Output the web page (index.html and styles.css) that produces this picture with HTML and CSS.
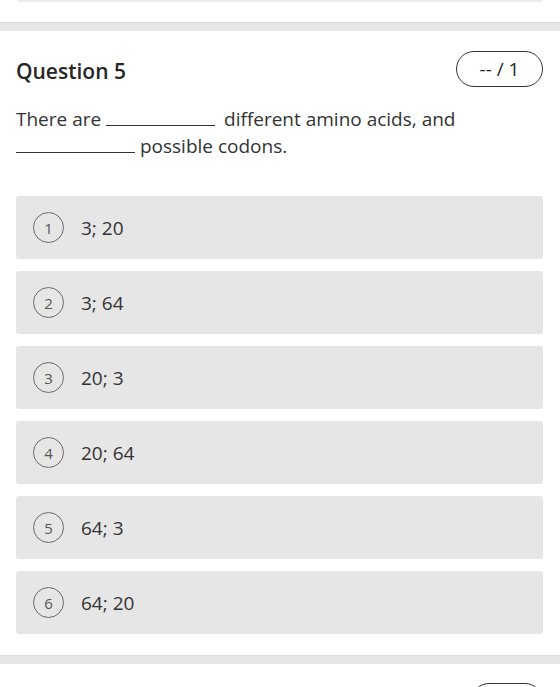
FILE: index.html
```html
<!doctype html>
<html lang="en">
<head>
    <meta charset="utf-8">
    <title>Question 5</title>
    <link rel="stylesheet" href="styles.css">
</head>
<body>
    <div class="prev-option"></div>
    <div class="divider"></div>

    <div class="question">
        <div class="question-head">
            <h2 class="question-title">Question 5</h2>
            <div class="score">-- / 1</div>
        </div>

        <p class="question-text">There are <span class="blank blank-1"></span> different amino acids, and <span class="blank blank-2"></span> possible codons.</p>

        <div class="options">
            <div class="option"><span class="num">1</span><span class="answer">3; 20</span></div>
            <div class="option"><span class="num">2</span><span class="answer">3; 64</span></div>
            <div class="option"><span class="num">3</span><span class="answer">20; 3</span></div>
            <div class="option"><span class="num">4</span><span class="answer">20; 64</span></div>
            <div class="option"><span class="num">5</span><span class="answer">64; 3</span></div>
            <div class="option"><span class="num">6</span><span class="answer">64; 20</span></div>
        </div>
    </div>

    <div class="divider"></div>
    <div class="next-head">
        <div class="score score-next"></div>
    </div>
</body>
</html>
```

FILE: styles.css
```css
html, body {
    height: 687px;
    overflow: hidden;
}
body {
    font-family: "Open Sans", sans-serif;
    margin: 0;
    color: #333;
    background: #fff;
}
.prev-option {
    height: 2px;
    margin: 0 17px 20px 17px;
    background: #ececec;
    border-radius: 0 0 3px 3px;
}
.divider {
    height: 8px;
    background: #e6e6e6;
    border-top: 1px solid #dadada;
}
.question {
    padding: 20px 17px 21px 16px;
}
.question-head {
    display: flex;
    justify-content: space-between;
    align-items: center;
}
.question-title {
    margin: 4px 0 0 0;
    font-size: 21px;
    font-weight: 600;
    color: #262626;
}
.score {
    width: 85px;
    height: 34px;
    border: 1.5px solid #333;
    border-radius: 20px;
    display: flex;
    align-items: center;
    justify-content: center;
    font-size: 19px;
    color: #262626;
}
.question-text {
    margin: 19px 0 0 0;
    font-size: 19px;
    line-height: 27px;
    color: #333;
}
.blank {
    display: inline-block;
    height: 1px;
    border-bottom: 1px solid #333;
    vertical-align: baseline;
}
.blank-1 {
    width: 109px;
    margin-right: 4px;
}
.blank-2 {
    width: 119px;
}
.options {
    margin-top: 36px;
    display: flex;
    flex-direction: column;
    gap: 12px;
}
.option {
    height: 63px;
    background: #e6e6e6;
    border-radius: 3px;
    display: flex;
    align-items: center;
    padding-left: 17px;
}
.num {
    width: 29px;
    height: 29px;
    border: 1.5px solid #6b6b6b;
    border-radius: 50%;
    display: flex;
    align-items: center;
    justify-content: center;
    font-size: 15px;
    color: #555;
}
.answer {
    margin-left: 17px;
    font-size: 19px;
    color: #333;
}
.next-head {
    display: flex;
    justify-content: flex-end;
    padding: 19px 17px 0 16px;
}
.score-next {
    width: 70px;
}
```
